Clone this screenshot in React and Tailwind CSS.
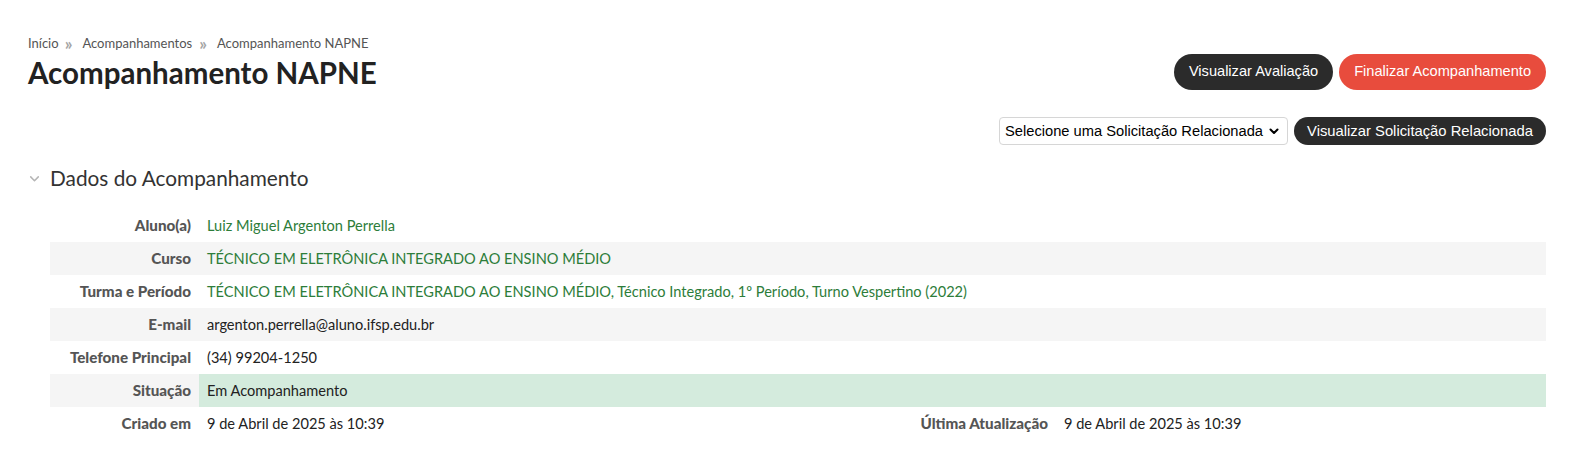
function Chevron({ className }) {
  return (
    <svg className={className} viewBox="0 0 12 12" fill="none" stroke="currentColor" strokeWidth="1.4" strokeLinecap="round" strokeLinejoin="round">
      <path d="M2.5 4.5 6 8l3.5-3.5" />
    </svg>
  );
}

const rows = [
  { label: "Aluno(a)", value: "Luiz Miguel Argenton Perrella", link: true },
  { label: "Curso", value: "TÉCNICO EM ELETRÔNICA INTEGRADO AO ENSINO MÉDIO", link: true, shade: true },
  {
    label: "Turma e Período",
    value: "TÉCNICO EM ELETRÔNICA INTEGRADO AO ENSINO MÉDIO, Técnico Integrado, 1º Período, Turno Vespertino (2022)",
    link: true,
  },
  { label: "E-mail", value: "argenton.perrella@aluno.ifsp.edu.br", shade: true },
  { label: "Telefone Principal", value: "(34) 99204-1250" },
  { label: "Situação", value: "Em Acompanhamento", status: true },
];

export default function App() {
  return (
    <div className="w-[1580px] h-[465px] bg-white px-[28px] pt-[36px] text-[#333]" style={{ fontFamily: "Lato, 'Noto Sans', sans-serif" }}>
      <div className="flex justify-between">
        <div>
          <nav className="flex items-center text-[13px] text-[#555] leading-[15px]">
            <span>Início</span>
            <span className="text-[#a5a5a5] text-[17px] leading-[15px] font-bold ml-[6px] mr-[10px]">»</span>
            <span>Acompanhamentos</span>
            <span className="text-[#a5a5a5] text-[17px] leading-[15px] font-bold ml-[7px] mr-[10px]">»</span>
            <span>Acompanhamento NAPNE</span>
          </nav>
          <h1 className="mt-[4px] text-[29.5px] font-bold leading-[36px] text-[#222]">Acompanhamento NAPNE</h1>
        </div>
        <div className="flex flex-col items-end pt-[18px] pr-[6px]" style={{ fontFamily: "'Liberation Sans', Arial, sans-serif" }}>
          <div className="flex gap-[6px]">
            <button className="h-[36px] px-[15px] rounded-full bg-[#2b2b2b] text-white text-[14.6px]">Visualizar Avaliação</button>
            <button className="h-[36px] px-[15px] rounded-full bg-[#e84c3d] text-white text-[14.6px]">Finalizar Acompanhamento</button>
          </div>
          <div className="flex gap-[6px] mt-[27px]">
            <div className="h-[28px] w-[289px] border border-[#d6d6d6] rounded-[4px] flex items-center justify-between pl-[5px] pr-[7px] text-[14.7px] text-black">
              <span>Selecione uma Solicitação Relacionada</span>
              <Chevron className="w-[12px] h-[12px] text-black [stroke-width:2]" />
            </div>
            <button className="h-[28px] w-[252px] rounded-full bg-[#2b2b2b] text-white text-[14.8px]">Visualizar Solicitação Relacionada</button>
          </div>
        </div>
      </div>

      <div className="flex items-center mt-[18px] h-[30px]">
        <Chevron className="w-[13px] h-[13px] text-[#b5b5b5] mr-[9px]" />
        <h2 className="text-[20.8px] text-[#333] leading-[28px]">Dados do Acompanhamento</h2>
      </div>

      <div className="ml-[22px] mr-[6px] mt-[16px] text-[14.6px] leading-[33px]">
        {rows.map((r) => (
          <div key={r.label} className={`grid grid-cols-[149px_1fr] ${r.shade ? "bg-[#f5f5f5]" : ""} ${r.status ? "bg-[#f5f5f5]" : ""}`}>
            <div className="text-right pr-[8px] font-black text-[15.2px] text-[#555]">{r.label}</div>
            <div className={`pl-[8px] ${r.link ? "text-[#2d7d3a]" : "text-[#222]"} ${r.status ? "bg-[#d4ebdd]" : ""}`}>{r.value}</div>
          </div>
        ))}
        <div className="grid grid-cols-[149px_707px_150px_1fr]">
          <div className="text-right pr-[8px] font-black text-[15.2px] text-[#555]">Criado em</div>
          <div className="pl-[8px] text-[#222]">9 de Abril de 2025 às 10:39</div>
          <div className="text-right pr-[8px] font-black text-[15.2px] text-[#555]">Última Atualização</div>
          <div className="pl-[8px] text-[#222]">9 de Abril de 2025 às 10:39</div>
        </div>
      </div>
    </div>
  );
}
